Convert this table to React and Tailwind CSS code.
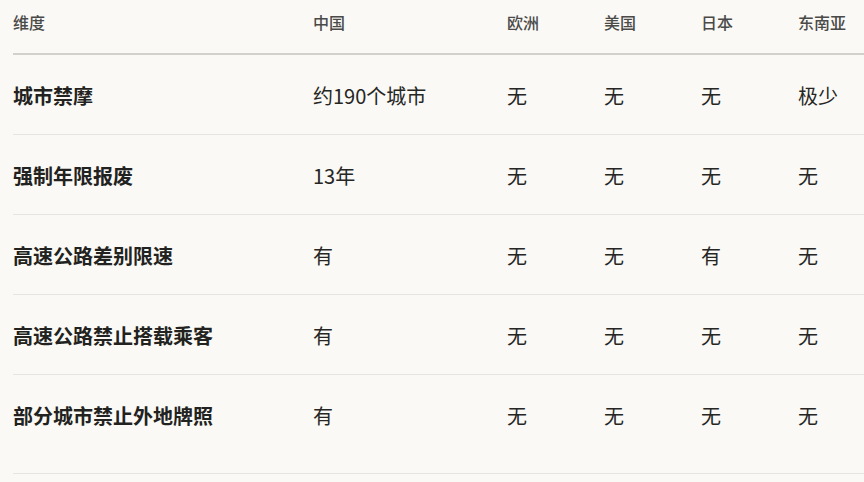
import React from "react";

const columns = ["维度", "中国", "欧洲", "美国", "日本", "东南亚"];

const rows = [
  ["城市禁摩", "约190个城市", "无", "无", "无", "极少"],
  ["强制年限报废", "13年", "无", "无", "无", "无"],
  ["高速公路差别限速", "有", "无", "无", "有", "无"],
  ["高速公路禁止搭载乘客", "有", "无", "无", "无", "无"],
  ["部分城市禁止外地牌照", "有", "无", "无", "无", "无"],
];

const App = () => {
  return (
    <div
      className="w-[864px] h-[482px] overflow-hidden bg-[#faf9f5] pl-[13px]"
      style={{ fontFamily: '"Noto Sans CJK SC", "Noto Sans", sans-serif' }}
    >
      <div className="w-[900px]">
        <table className="w-full table-fixed border-collapse text-left">
          <colgroup>
            <col className="w-[300px]" />
            <col className="w-[194px]" />
            <col className="w-[97px]" />
            <col className="w-[97px]" />
            <col className="w-[97px]" />
            <col />
          </colgroup>
          <thead>
            <tr className="h-[54px] border-b-2 border-[#d2d1cc]">
              {columns.map((c) => (
                <th
                  key={c}
                  className="p-0 pt-[12px] align-top text-[16px] leading-[20px] font-medium text-[#4a4a48]"
                >
                  {c}
                </th>
              ))}
            </tr>
          </thead>
          <tbody>
            {rows.map((r, i) => (
              <tr
                key={r[0]}
                className={
                  i < rows.length - 1
                    ? "h-[80px] border-b border-[#e6e5e0]"
                    : "h-[80px]"
                }
              >
                {r.map((cell, j) => (
                  <td
                    key={j}
                    className={
                      j === 0
                        ? "p-0 pt-[3px] align-middle text-[20px] font-semibold text-[#222220]"
                        : "p-0 pt-[3px] align-middle text-[20px] text-[#262624]"
                    }
                  >
                    {cell}
                  </td>
                ))}
              </tr>
            ))}
          </tbody>
        </table>
        <div className="h-[20px] border-b border-[#e6e5e0]" />
      </div>
    </div>
  );
};

export default App;
